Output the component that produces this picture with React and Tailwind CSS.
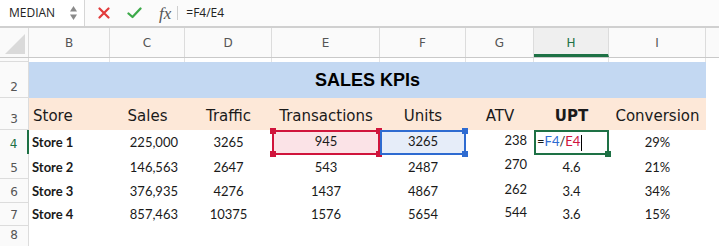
const cols = ["B", "C", "D", "E", "F", "G", "H", "I"];

const stores = [
  { name: "Store 1", sales: "225,000", traffic: "3265", tx: "945", units: "3265", atv: "238", upt: null, conv: "29%" },
  { name: "Store 2", sales: "146,563", traffic: "2647", tx: "543", units: "2487", atv: "270", upt: "4.6", conv: "21%" },
  { name: "Store 3", sales: "376,935", traffic: "4276", tx: "1437", units: "4867", atv: "262", upt: "3.4", conv: "34%" },
  { name: "Store 4", sales: "857,463", traffic: "10375", tx: "1576", units: "5654", atv: "544", upt: "3.6", conv: "15%" },
];

const rowHeights = ["h-[24px]", "h-[25px]", "h-[24px]", "h-[23px]"];

const grid = "grid grid-cols-[29px_81px_75px_87px_108px_86px_68px_75px_97px_13px]";
const data = "font-['Lato',sans-serif] text-[13px] text-[#1a1a1a]";

const Handle = ({ className }) => (
  <span className={`absolute h-[6px] w-[6px] ${className}`} />
);

const RowHead = ({ label, active, className = "" }) => (
  <div
    className={`flex items-end justify-center border-b border-r border-[#dcdcdc] bg-[#fafafa] pb-[1px] font-['DejaVu_Sans',sans-serif] text-[12px] ${
      active ? "border-r-2 border-r-[#1e7145] text-[#1e7145]" : "text-[#555]"
    } ${className}`}
  >
    {label}
  </div>
);

const FormulaBar = () => (
  <div className="flex h-[28px] items-center border-b-2 border-[#d0d0d0] bg-[#fbfbfb] font-['Open_Sans',sans-serif] text-[12px] text-[#222]">
    <div className="flex h-full w-[85px] items-center justify-between border-r border-[#d6d6d6] bg-white pl-[9px] pr-[6px]">
      <span>MEDIAN</span>
      <svg width="9" height="18" viewBox="0 0 9 18">
        <path d="M4.5 2 L8 7.5 L1 7.5 Z" fill="#8a8a8a" />
        <path d="M4.5 16 L8 10.5 L1 10.5 Z" fill="#8a8a8a" />
      </svg>
    </div>
    <div className="ml-[13px] flex items-center">
      <svg width="12" height="12" viewBox="0 0 12 12">
        <path d="M1.5 1.5 L10.5 10.5 M10.5 1.5 L1.5 10.5" stroke="#e23b3b" strokeWidth="2.2" strokeLinecap="round" />
      </svg>
      <svg className="ml-[17px]" width="15" height="12" viewBox="0 0 15 12">
        <path d="M1.5 6.5 L5.5 10 L13.5 1.5" stroke="#3daa4a" strokeWidth="2.3" fill="none" strokeLinecap="round" strokeLinejoin="round" />
      </svg>
      <span className="ml-[17px] font-['Liberation_Serif',serif] text-[17px] italic leading-none text-[#555]">
        fx
      </span>
      <span className="ml-[6px] h-[14px] w-px bg-[#cfcfcf]" />
      <span className="ml-[8px]">=F4/E4</span>
    </div>
  </div>
);

const ColumnHeader = () => (
  <div className={`${grid} h-[30px] border-b border-[#c9c9c9] bg-[#fafafa] font-['DejaVu_Sans',sans-serif] text-[12px] text-[#555]`}>
    <div className="relative border-r border-[#dcdcdc]">
      <svg className="absolute bottom-[3px] right-[3px]" width="20" height="20" viewBox="0 0 20 20">
        <path d="M20 0 L20 20 L0 20 Z" fill="#dadada" />
      </svg>
    </div>
    {cols.map((c) => (
      <div
        key={c}
        className={`flex items-center justify-center border-r border-[#dcdcdc] ${
          c === "H" ? "border-b-[3px] border-b-[#1e7145] bg-[#efefef] pt-[3px] text-[#1e7145]" : ""
        }`}
      >
        {c}
      </div>
    ))}
    <div />
  </div>
);

export default function App() {
  return (
    <div className="h-[246px] w-[719px] overflow-hidden bg-white">
      <FormulaBar />
      <ColumnHeader />

      {/* row 1 */}
      <div className={`${grid} h-[4px]`}>
        <RowHead label="" />
        {cols.map((c) => (
          <div key={c} className="border-r border-[#e3e3e3]" />
        ))}
        <div />
      </div>

      {/* row 2 */}
      <div className={`${grid} h-[36px]`}>
        <RowHead label="2" />
        <div className="col-span-8 flex items-end justify-center bg-[#c3d8f2] pb-[4px] font-['Liberation_Sans',sans-serif] text-[18px] font-bold text-black">
          SALES KPIs
        </div>
        <div />
      </div>

      {/* row 3 */}
      <div className={`${grid} h-[32px]`}>
        <RowHead label="3" />
        <div className="col-span-8 grid grid-cols-[81px_75px_87px_108px_86px_68px_75px_97px] items-end bg-[#fde8d8] pb-[3px] font-['DejaVu_Sans',sans-serif] text-[15px] text-[#1a1a1a]">
          <div className="pl-[4px]">Store</div>
          <div className="text-center">Sales</div>
          <div className="text-center">Traffic</div>
          <div className="text-center">Transactions</div>
          <div className="text-center">Units</div>
          <div className="text-center">ATV</div>
          <div className="text-center font-bold">UPT</div>
          <div className="text-center">Conversion</div>
        </div>
        <div />
      </div>

      {stores.map((s, i) => (
        <div key={s.name} className={`${grid} ${rowHeights[i]} ${data}`}>
          <RowHead label={String(i + 4)} active={i === 0} />
          <div className="flex items-end pb-[2px] pl-[3px] font-bold">{s.name}</div>
          <div className="flex items-end justify-end pb-[2px] pr-[7px]">{s.sales}</div>
          <div className="flex items-end justify-center pb-[2px]">{s.traffic}</div>
          {i === 0 ? (
            <div className="relative flex items-end justify-center border-2 border-[#d0143c] bg-[#fbe3e7] pb-[1px]">
              {s.tx}
              <Handle className="-left-[4px] -top-[4px] bg-[#d0143c]" />
              <Handle className="-right-[4px] -top-[4px] bg-[#d0143c]" />
              <Handle className="-bottom-[4px] -left-[4px] bg-[#d0143c]" />
              <Handle className="-bottom-[4px] -right-[4px] bg-[#d0143c]" />
            </div>
          ) : (
            <div className="flex items-end justify-center pb-[2px]">{s.tx}</div>
          )}
          {i === 0 ? (
            <div className="relative flex items-end justify-center border-2 border-[#2e6bd1] bg-[#e6edf9] pb-[1px]">
              {s.units}
              <Handle className="-right-[4px] -top-[4px] bg-[#2e6bd1]" />
              <Handle className="-bottom-[4px] -right-[4px] bg-[#2e6bd1]" />
            </div>
          ) : (
            <div className="flex items-end justify-center pb-[2px]">{s.units}</div>
          )}
          <div className="flex items-center justify-end pb-[3px] pr-[7px]">{s.atv}</div>
          {i === 0 ? (
            <div className="relative flex items-end border-2 border-[#1e7145] pb-[1px] pl-[1px]">
              <span>=</span>
              <span className="text-[#2e6bd1]">F4</span>
              <span>/</span>
              <span className="text-[#d0143c]">E4</span>
              <span className="mb-[1px] ml-[1px] h-[16px] w-px bg-black" />
              <Handle className="-bottom-[4px] -right-[4px] h-[5px] w-[5px] bg-[#1e7145]" />
            </div>
          ) : (
            <div className="flex items-end justify-center pb-[2px]">{s.upt}</div>
          )}
          <div className="flex items-end justify-center pb-[2px]">{s.conv}</div>
          <div />
        </div>
      ))}

      {/* row 8 */}
      <div className={`${grid} h-[18px]`}>
        <RowHead label="8" />
      </div>
      <div className={`${grid} h-[10px]`}>
        <RowHead label="" />
      </div>
    </div>
  );
}
